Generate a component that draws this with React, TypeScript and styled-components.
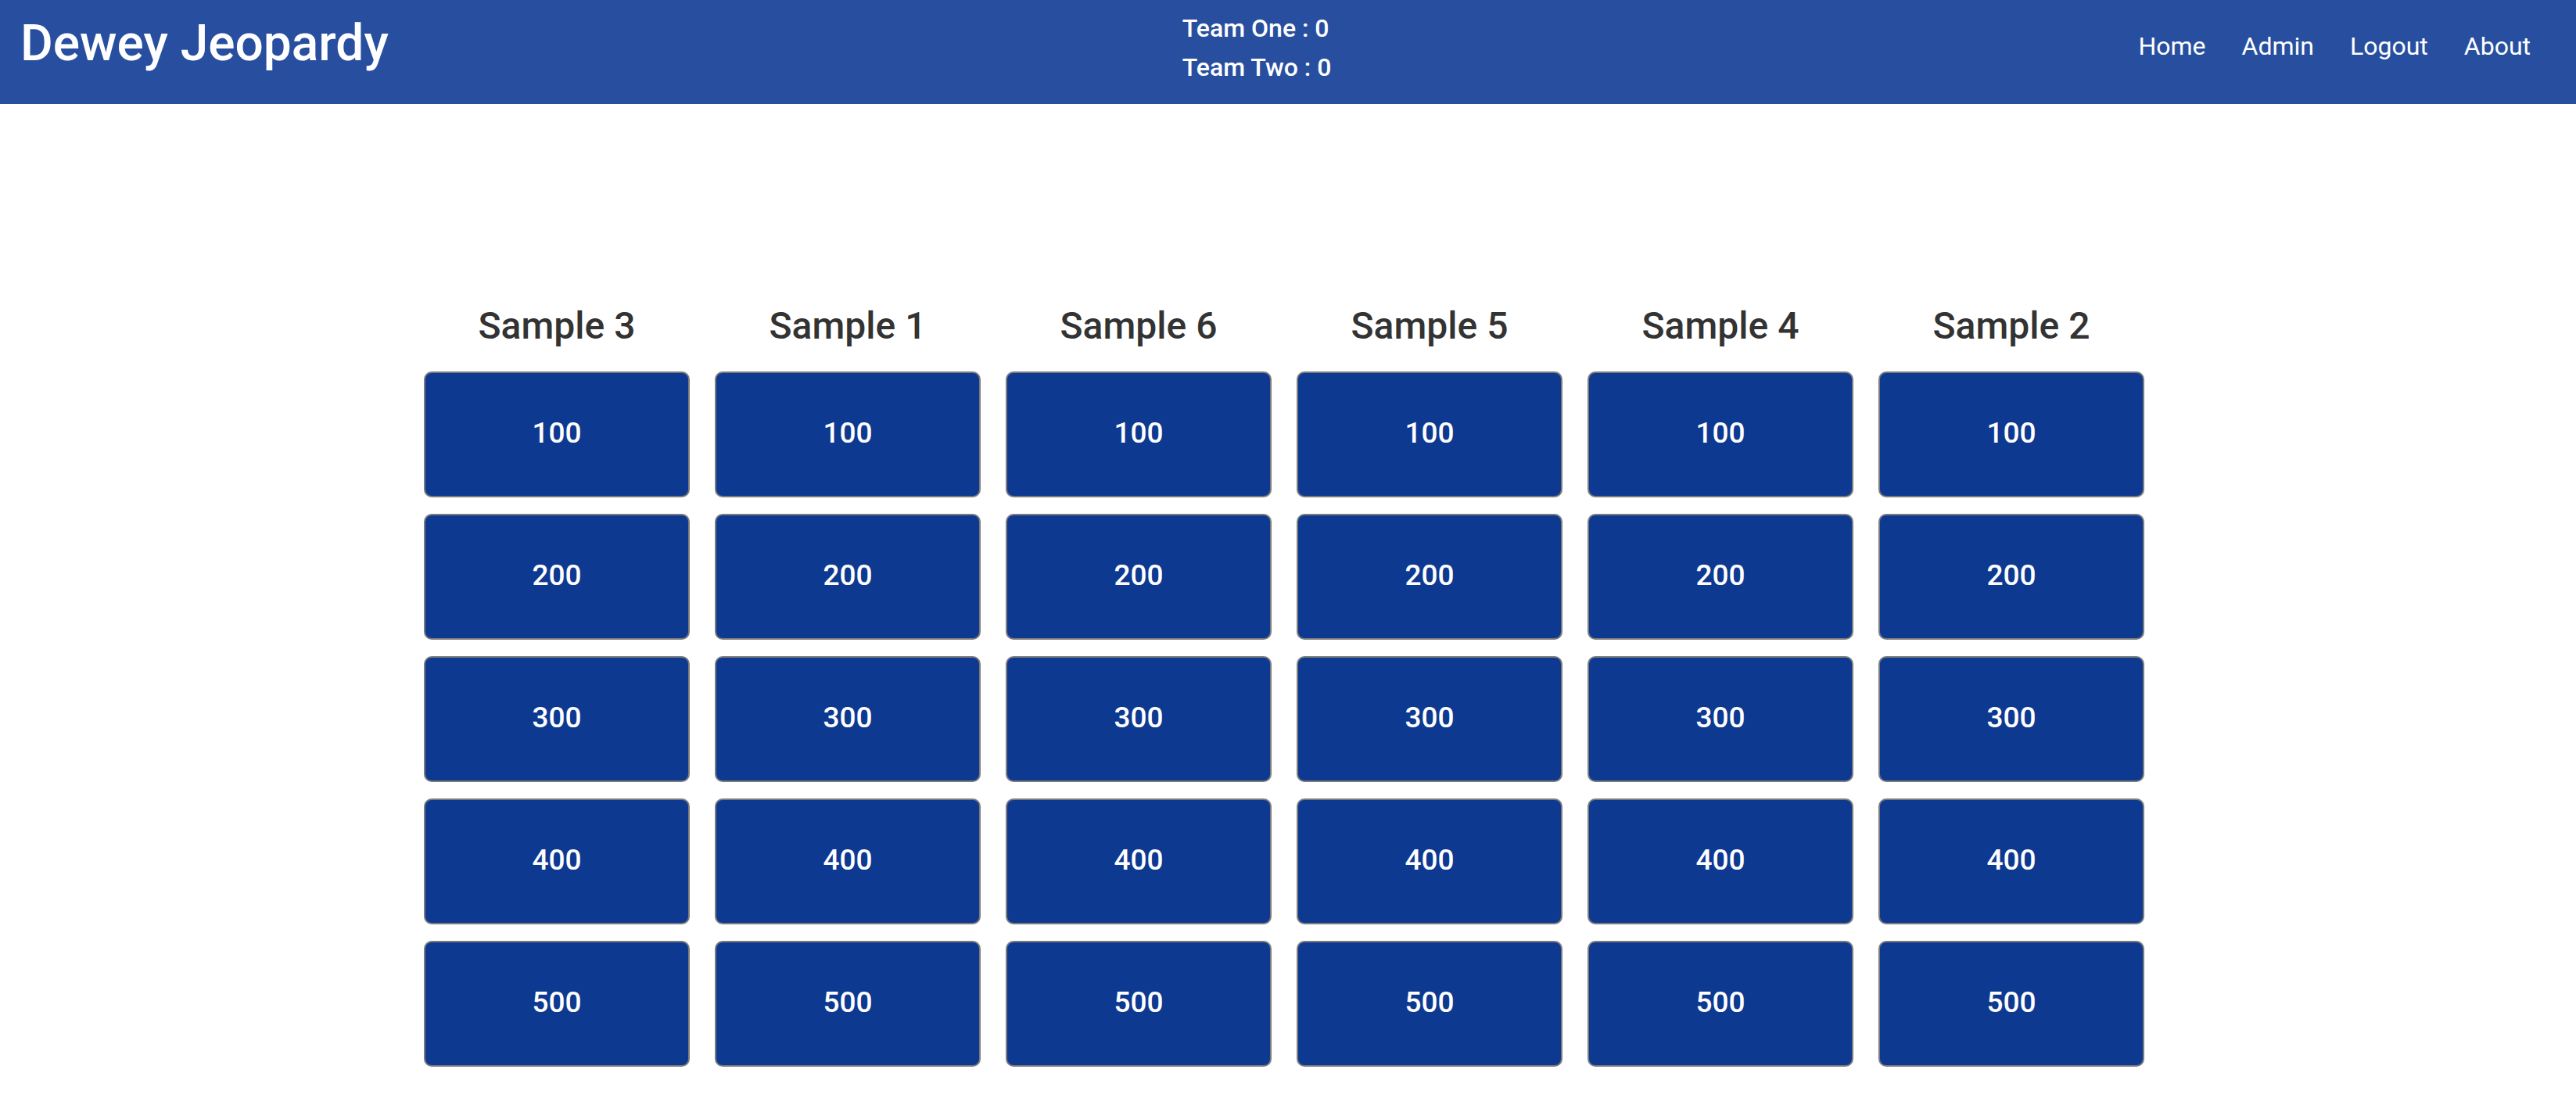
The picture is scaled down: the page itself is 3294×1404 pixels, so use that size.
import styled, { createGlobalStyle } from 'styled-components';

const categories = ['Sample 3', 'Sample 1', 'Sample 6', 'Sample 5', 'Sample 4', 'Sample 2'];
const values = [100, 200, 300, 400, 500];

const GlobalStyle = createGlobalStyle`
  html,
  body {
    margin: 0;
    padding: 0;
    background-color: #fff;
    font-family: Roboto, 'Liberation Sans', sans-serif;
  }
`;

const App = () => {
  return (
    <>
      <GlobalStyle />
      <Navbar>
        <Brand href='#'>Dewey Jeopardy</Brand>
        <Scores>
          <p className='Score'>Team One : 0</p>
          <p className='Score'>Team Two : 0</p>
        </Scores>
        <NavLinks>
          <a href='#' className='NavLink'>
            Home
          </a>
          <a href='#' className='NavLink'>
            Admin
          </a>
          <a href='#' className='NavLink'>
            Logout
          </a>
          <a href='#' className='NavLink'>
            About
          </a>
        </NavLinks>
      </Navbar>
      <Main>
        <Board>
          {categories.map((category) => (
            <Column key={category}>
              <h2 className='CategoryTitle'>{category}</h2>
              {values.map((value) => (
                <QuestionBtn key={value}>{value}</QuestionBtn>
              ))}
            </Column>
          ))}
        </Board>
      </Main>
    </>
  );
};

const Navbar = styled.nav`
  height: 133px;
  box-sizing: border-box;
  background-color: #284f9f;
  display: flex;
  align-items: flex-start;
  padding: 0 35px 0 26px;
`;

const Brand = styled.a`
  padding-top: 24px;
  font-size: 64px;
  line-height: 64px;
  font-weight: 500;
  color: #fff;
  text-decoration: none;
  white-space: nowrap;
`;

const Scores = styled.div`
  margin: 0 auto;
  padding: 11px 0 0 6px;

  & > .Score {
    margin: 0;
    font-size: 32px;
    line-height: 50px;
    font-weight: 500;
    color: #fff;
    white-space: nowrap;
  }
`;

const NavLinks = styled.div`
  display: flex;
  padding-top: 39px;

  & > .NavLink {
    padding: 0 23px;
    font-size: 32px;
    line-height: 40px;
    font-weight: 400;
    color: #fff;
    text-decoration: none;
  }
`;

const Main = styled.main`
  display: flex;
  justify-content: center;
  padding: 256px 10px 0 0;
`;

const Board = styled.div`
  display: grid;
  grid-template-columns: repeat(6, 340px);
  column-gap: 32px;
`;

const Column = styled.div`
  display: flex;
  flex-direction: column;
  gap: 21px;

  & > .CategoryTitle {
    margin: 0 0 9px;
    text-align: center;
    font-size: 48px;
    line-height: 56px;
    font-weight: 500;
    color: #333;
  }
`;

const QuestionBtn = styled.button`
  width: 340px;
  height: 161px;
  box-sizing: border-box;
  border: 2px solid #7c7c7c;
  border-radius: 10px;
  padding: 0 0 4px;
  background-color: #0e3991;
  color: #fff;
  font-family: Roboto, 'Liberation Sans', sans-serif;
  font-size: 37px;
  font-weight: 500;
  display: flex;
  align-items: center;
  justify-content: center;
  &:hover {
    cursor: pointer;
  }
`;

export default App;
